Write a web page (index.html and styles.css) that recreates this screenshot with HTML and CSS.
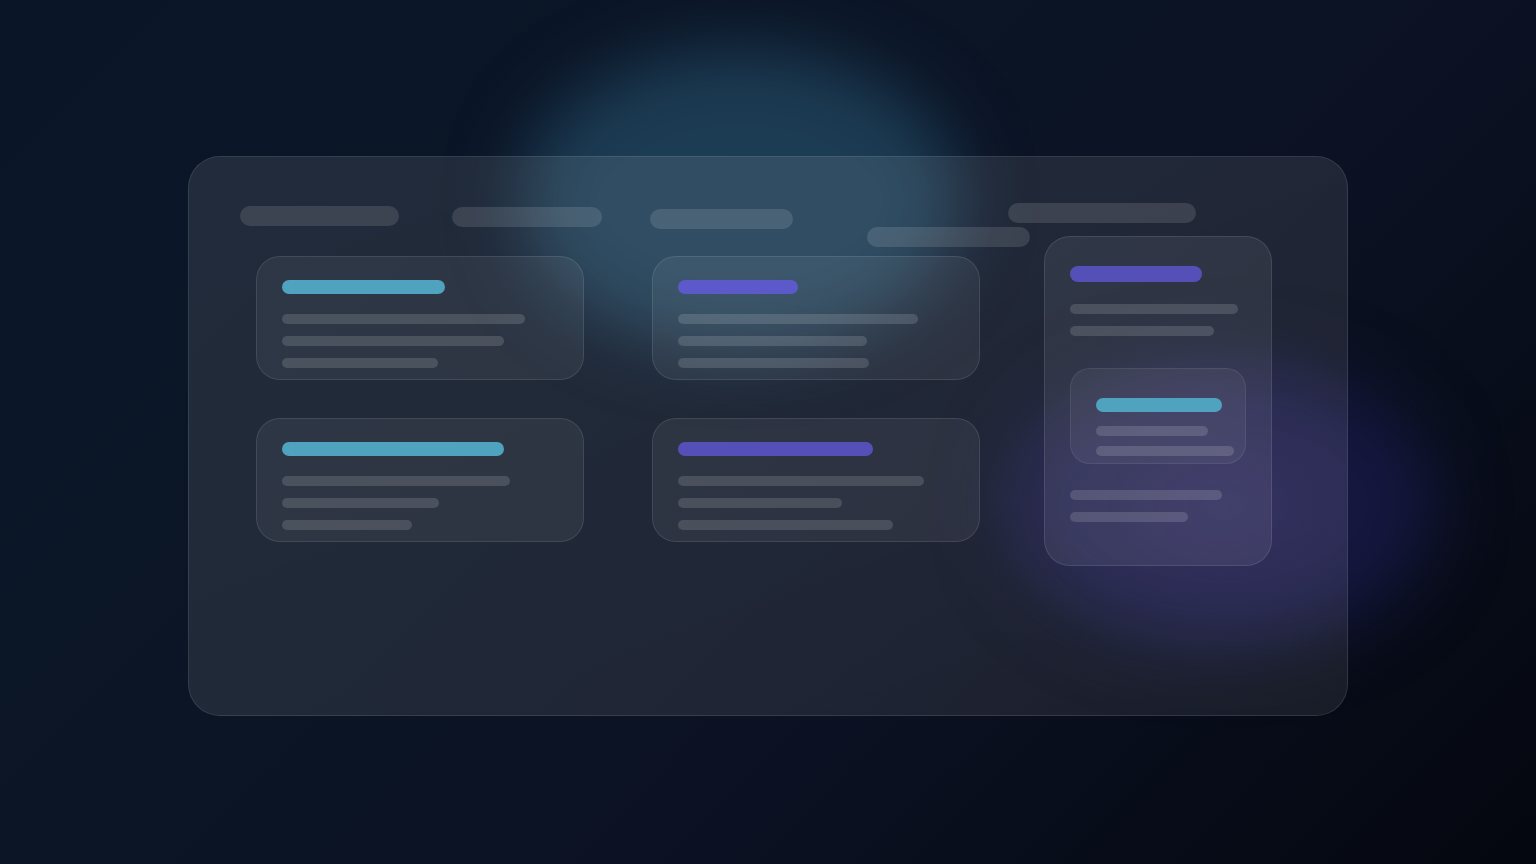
FILE: index.html
```html
<!DOCTYPE html>
<html lang="en">
<head>
<meta charset="utf-8">
<title>Glass skeleton</title>
<link rel="stylesheet" href="styles.css">
</head>
<body>
  <div class="glow glow-teal"></div>
  <div class="glow glow-violet"></div>

  <main class="panel">
    <div class="header">
      <span class="pill pill-1"></span>
      <span class="pill pill-2"></span>
      <span class="pill pill-3"></span>
      <div class="pill-stack">
        <span class="pill pill-5"></span>
        <span class="pill pill-4"></span>
      </div>
    </div>

    <div class="body">
      <div class="card-grid">
        <div class="card">
          <span class="bar bar-cyan" style="width:163px"></span>
          <span class="line first" style="width:243px"></span>
          <span class="line" style="width:222px"></span>
          <span class="line" style="width:156px"></span>
        </div>
        <div class="card">
          <span class="bar bar-violet" style="width:120px"></span>
          <span class="line first" style="width:240px"></span>
          <span class="line" style="width:189px"></span>
          <span class="line" style="width:191px"></span>
        </div>
        <div class="card">
          <span class="bar bar-cyan" style="width:222px"></span>
          <span class="line first" style="width:228px"></span>
          <span class="line" style="width:157px"></span>
          <span class="line" style="width:130px"></span>
        </div>
        <div class="card">
          <span class="bar bar-violet bar-deep" style="width:195px"></span>
          <span class="line first" style="width:246px"></span>
          <span class="line" style="width:164px"></span>
          <span class="line" style="width:215px"></span>
        </div>
      </div>

      <aside class="tall-card">
        <span class="bar bar-violet bar-deep tall-title" style="width:132px"></span>
        <span class="line tall-first" style="width:168px"></span>
        <span class="line" style="width:144px"></span>
        <div class="inner-card">
          <span class="bar bar-cyan" style="width:126px"></span>
          <span class="line inner-first" style="width:112px"></span>
          <span class="line inner-next" style="width:138px"></span>
        </div>
        <span class="line after-inner" style="width:152px"></span>
        <span class="line" style="width:118px"></span>
      </aside>
    </div>
  </main>
</body>
</html>
```

FILE: styles.css
```css
html, body {
  margin: 0;
  padding: 0;
  width: 100%;
  height: 100%;
  overflow: hidden;
}

body {
  position: relative;
  font-family: "Inter", "Liberation Sans", sans-serif;
  background: linear-gradient(135deg, #0a1628 0%, #0b1526 40%, #0c1224 62%, #04070f 100%);
  display: flex;
  justify-content: center;
  align-items: flex-start;
}

/* decorative glows behind the glass */
.glow {
  position: absolute;
  border-radius: 50%;
  filter: blur(34px);
  z-index: 0;
}

.glow-teal {
  left: 520px;
  top: 50px;
  width: 440px;
  height: 300px;
  background: #1c3c54;
}

.glow-violet {
  left: 1005px;
  top: 358px;
  width: 430px;
  height: 290px;
  background: #15173f;
}

/* main glass panel */
.panel {
  position: relative;
  z-index: 1;
  box-sizing: border-box;
  width: 1160px;
  height: 560px;
  margin-top: 156px;
  padding: 46px 51px 0 51px;
  border-radius: 32px;
  border: 1px solid rgba(255, 255, 255, 0.1);
  background:
    radial-gradient(ellipse 240px 160px at 1035px 350px, rgba(125, 100, 210, 0.14), rgba(125, 100, 210, 0) 100%),
    linear-gradient(160deg, rgba(255, 255, 255, 0.095) 0%, rgba(255, 255, 255, 0.085) 60%, rgba(255, 255, 255, 0.075) 100%);
}

/* header skeleton pills */
.header {
  display: flex;
  align-items: flex-start;
  height: 44px;
}

.pill {
  display: block;
  height: 20px;
  border-radius: 10px;
  background: rgba(255, 255, 255, 0.12);
}

.pill-1 { width: 159px; margin-top: 3px; }
.pill-2 { width: 150px; margin-top: 4px; margin-left: 53px; }
.pill-3 { width: 143px; margin-top: 6px; margin-left: 48px; }

.pill-stack {
  display: flex;
  flex-direction: column;
  margin-left: 74px;
}

.pill-5 { width: 188px; margin-left: 141px; }
.pill-4 { width: 163px; margin-top: 4px; }

/* body */
.body {
  display: flex;
  align-items: flex-start;
  margin-top: 9px;
  padding-left: 16px;
}

.card-grid {
  display: grid;
  grid-template-columns: 328px 328px;
  grid-auto-rows: 124px;
  column-gap: 68px;
  row-gap: 38px;
}

.card {
  box-sizing: border-box;
  display: flex;
  flex-direction: column;
  align-items: flex-start;
  padding: 23px 25px 0 25px;
  border-radius: 24px;
  border: 1px solid rgba(255, 255, 255, 0.1);
  background: rgba(255, 255, 255, 0.06);
}

.bar {
  display: block;
  height: 14px;
  border-radius: 7px;
}

.bar-cyan { background: #4fa3be; }
.bar-violet { background: #5c59cb; }
.bar-deep { background: #5550b8; }

.line {
  display: block;
  height: 10px;
  border-radius: 5px;
  background: rgba(255, 255, 255, 0.14);
  margin-top: 12px;
}

.line.first { margin-top: 20px; }

/* tall right card */
.tall-card {
  box-sizing: border-box;
  width: 228px;
  height: 330px;
  margin-left: 64px;
  margin-top: -20px;
  padding: 29px 25px 0 25px;
  display: flex;
  flex-direction: column;
  align-items: flex-start;
  border-radius: 26px;
  border: 1px solid rgba(255, 255, 255, 0.1);
  background: rgba(255, 255, 255, 0.07);
}

.tall-title { height: 16px; border-radius: 8px; }
.line.tall-first { margin-top: 22px; }

.inner-card {
  box-sizing: border-box;
  width: 176px;
  height: 96px;
  margin-top: 32px;
  padding: 29px 0 0 25px;
  display: flex;
  flex-direction: column;
  align-items: flex-start;
  border-radius: 20px;
  border: 1px solid rgba(255, 255, 255, 0.08);
  background: rgba(255, 255, 255, 0.05);
}

.line.inner-first { margin-top: 14px; }
.line.inner-next { margin-top: 10px; }
.line.after-inner { margin-top: 26px; }
```
